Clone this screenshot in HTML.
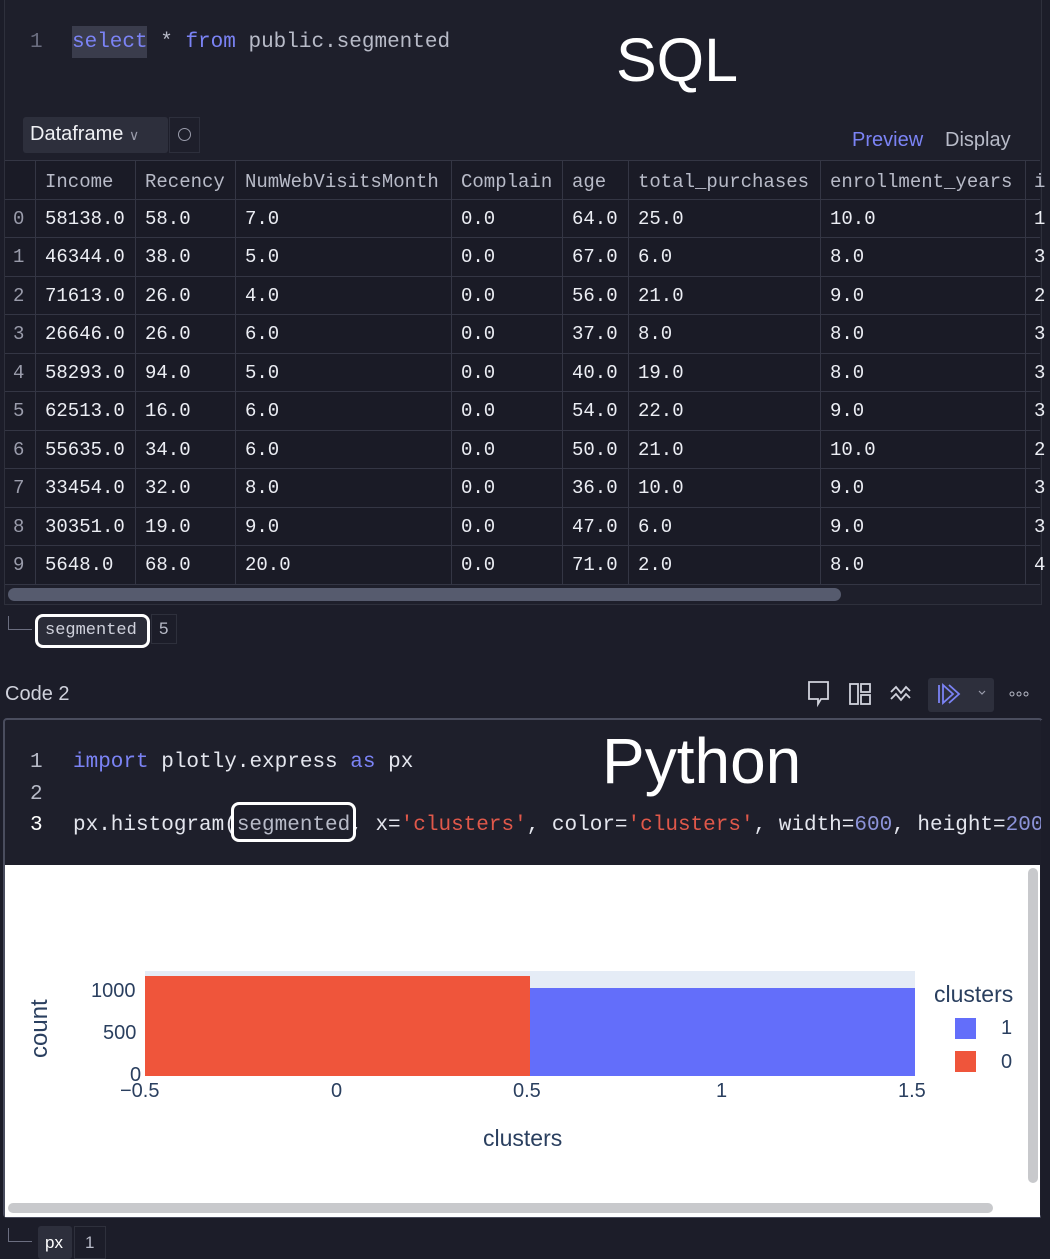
<!DOCTYPE html>
<html><head><meta charset="utf-8"><style>
*{margin:0;padding:0;box-sizing:border-box}
body{width:1050px;height:1259px;background:#1c1d29;position:relative;overflow:hidden;font-family:"Liberation Sans",sans-serif;color:#e4e6ee}
.a{position:absolute;white-space:nowrap}
.m{font-family:"Liberation Mono",monospace}
.kw{color:#7b83f5}
.str{color:#e0584a}
.num{color:#8c93d8}
.cell{position:absolute;font-family:"Liberation Mono",monospace;font-size:19px;color:#eceef4;white-space:nowrap}
.hl{position:absolute;left:5px;width:1035px;height:1px;background:#343644}
.vl{position:absolute;top:160px;width:1px;height:424px;background:#343644}
</style></head><body>
<div class="a" style="left:4px;top:0;width:1038px;height:605px;border:1px solid #2e303c;border-top:none;background:#1e1f2b"></div>
<div class="a m" style="left:30px;top:31px;font-size:21px;color:#6b6e80">1</div>
<div class="a" style="left:72px;top:26px;width:75px;height:32px;background:#3a3c4c"></div>
<div class="a m" style="left:72px;top:31px;font-size:21px;color:#b8bbc8"><span class="kw">select</span> * <span class="kw">from</span> public.segmented</div>
<div class="a" style="left:616px;top:25px;font-size:61px;color:#fff">SQL</div>
<div class="a" style="left:23px;top:117px;width:145px;height:36px;background:#2d2f3c;border-radius:3px"></div>
<div class="a" style="left:30px;top:123px;font-size:20px;color:#f0f1f5">Dataframe <span style="font-size:14px;color:#9a9cab">&#8744;</span></div>
<div class="a" style="left:169px;top:117px;width:31px;height:36px;border:1px solid #2d2f3c"></div>
<div class="a" style="left:178px;top:128px;width:13px;height:13px;border:1.5px solid #9a9cab;border-radius:50%"></div>
<div class="a" style="left:852px;top:129px;font-size:20px;color:#7b83f5">Preview</div>
<div class="a" style="left:852px;top:160px;width:75px;height:2px;background:#b8bbc8"></div>
<div class="a" style="left:945px;top:129px;font-size:20px;color:#b8bbc8">Display</div>
<div class="a" style="left:5px;top:160px;width:1035px;height:424px;background:#1a1b26"></div>
<div class="hl" style="top:160px"></div>
<div class="hl" style="top:199px"></div><div class="hl" style="top:237px"></div><div class="hl" style="top:276px"></div><div class="hl" style="top:314px"></div><div class="hl" style="top:353px"></div><div class="hl" style="top:391px"></div><div class="hl" style="top:430px"></div><div class="hl" style="top:468px"></div><div class="hl" style="top:507px"></div><div class="hl" style="top:545px"></div><div class="hl" style="top:584px"></div>
<div class="vl" style="left:35px"></div><div class="vl" style="left:135px"></div><div class="vl" style="left:235px"></div><div class="vl" style="left:451px"></div><div class="vl" style="left:562px"></div><div class="vl" style="left:628px"></div><div class="vl" style="left:820px"></div><div class="vl" style="left:1025px"></div>
<div class="cell" style="left:45px;top:171px;color:#b8bbc8">Income</div>
<div class="cell" style="left:145px;top:171px;color:#b8bbc8">Recency</div>
<div class="cell" style="left:245px;top:171px;color:#b8bbc8">NumWebVisitsMonth</div>
<div class="cell" style="left:461px;top:171px;color:#b8bbc8">Complain</div>
<div class="cell" style="left:572px;top:171px;color:#b8bbc8">age</div>
<div class="cell" style="left:638px;top:171px;color:#b8bbc8">total_purchases</div>
<div class="cell" style="left:830px;top:171px;color:#b8bbc8">enrollment_years</div>
<div class="cell" style="left:1034px;top:171px;color:#b8bbc8">i</div>
<div class="cell" style="left:13px;top:208px;color:#9a9cab">0</div><div class="cell" style="left:45px;top:208px">58138.0</div><div class="cell" style="left:145px;top:208px">58.0</div><div class="cell" style="left:245px;top:208px">7.0</div><div class="cell" style="left:461px;top:208px">0.0</div><div class="cell" style="left:572px;top:208px">64.0</div><div class="cell" style="left:638px;top:208px">25.0</div><div class="cell" style="left:830px;top:208px">10.0</div><div class="cell" style="left:1034px;top:208px">1</div>
<div class="cell" style="left:13px;top:246px;color:#9a9cab">1</div><div class="cell" style="left:45px;top:246px">46344.0</div><div class="cell" style="left:145px;top:246px">38.0</div><div class="cell" style="left:245px;top:246px">5.0</div><div class="cell" style="left:461px;top:246px">0.0</div><div class="cell" style="left:572px;top:246px">67.0</div><div class="cell" style="left:638px;top:246px">6.0</div><div class="cell" style="left:830px;top:246px">8.0</div><div class="cell" style="left:1034px;top:246px">3</div>
<div class="cell" style="left:13px;top:285px;color:#9a9cab">2</div><div class="cell" style="left:45px;top:285px">71613.0</div><div class="cell" style="left:145px;top:285px">26.0</div><div class="cell" style="left:245px;top:285px">4.0</div><div class="cell" style="left:461px;top:285px">0.0</div><div class="cell" style="left:572px;top:285px">56.0</div><div class="cell" style="left:638px;top:285px">21.0</div><div class="cell" style="left:830px;top:285px">9.0</div><div class="cell" style="left:1034px;top:285px">2</div>
<div class="cell" style="left:13px;top:323px;color:#9a9cab">3</div><div class="cell" style="left:45px;top:323px">26646.0</div><div class="cell" style="left:145px;top:323px">26.0</div><div class="cell" style="left:245px;top:323px">6.0</div><div class="cell" style="left:461px;top:323px">0.0</div><div class="cell" style="left:572px;top:323px">37.0</div><div class="cell" style="left:638px;top:323px">8.0</div><div class="cell" style="left:830px;top:323px">8.0</div><div class="cell" style="left:1034px;top:323px">3</div>
<div class="cell" style="left:13px;top:362px;color:#9a9cab">4</div><div class="cell" style="left:45px;top:362px">58293.0</div><div class="cell" style="left:145px;top:362px">94.0</div><div class="cell" style="left:245px;top:362px">5.0</div><div class="cell" style="left:461px;top:362px">0.0</div><div class="cell" style="left:572px;top:362px">40.0</div><div class="cell" style="left:638px;top:362px">19.0</div><div class="cell" style="left:830px;top:362px">8.0</div><div class="cell" style="left:1034px;top:362px">3</div>
<div class="cell" style="left:13px;top:400px;color:#9a9cab">5</div><div class="cell" style="left:45px;top:400px">62513.0</div><div class="cell" style="left:145px;top:400px">16.0</div><div class="cell" style="left:245px;top:400px">6.0</div><div class="cell" style="left:461px;top:400px">0.0</div><div class="cell" style="left:572px;top:400px">54.0</div><div class="cell" style="left:638px;top:400px">22.0</div><div class="cell" style="left:830px;top:400px">9.0</div><div class="cell" style="left:1034px;top:400px">3</div>
<div class="cell" style="left:13px;top:439px;color:#9a9cab">6</div><div class="cell" style="left:45px;top:439px">55635.0</div><div class="cell" style="left:145px;top:439px">34.0</div><div class="cell" style="left:245px;top:439px">6.0</div><div class="cell" style="left:461px;top:439px">0.0</div><div class="cell" style="left:572px;top:439px">50.0</div><div class="cell" style="left:638px;top:439px">21.0</div><div class="cell" style="left:830px;top:439px">10.0</div><div class="cell" style="left:1034px;top:439px">2</div>
<div class="cell" style="left:13px;top:477px;color:#9a9cab">7</div><div class="cell" style="left:45px;top:477px">33454.0</div><div class="cell" style="left:145px;top:477px">32.0</div><div class="cell" style="left:245px;top:477px">8.0</div><div class="cell" style="left:461px;top:477px">0.0</div><div class="cell" style="left:572px;top:477px">36.0</div><div class="cell" style="left:638px;top:477px">10.0</div><div class="cell" style="left:830px;top:477px">9.0</div><div class="cell" style="left:1034px;top:477px">3</div>
<div class="cell" style="left:13px;top:516px;color:#9a9cab">8</div><div class="cell" style="left:45px;top:516px">30351.0</div><div class="cell" style="left:145px;top:516px">19.0</div><div class="cell" style="left:245px;top:516px">9.0</div><div class="cell" style="left:461px;top:516px">0.0</div><div class="cell" style="left:572px;top:516px">47.0</div><div class="cell" style="left:638px;top:516px">6.0</div><div class="cell" style="left:830px;top:516px">9.0</div><div class="cell" style="left:1034px;top:516px">3</div>
<div class="cell" style="left:13px;top:554px;color:#9a9cab">9</div><div class="cell" style="left:45px;top:554px">5648.0</div><div class="cell" style="left:145px;top:554px">68.0</div><div class="cell" style="left:245px;top:554px">20.0</div><div class="cell" style="left:461px;top:554px">0.0</div><div class="cell" style="left:572px;top:554px">71.0</div><div class="cell" style="left:638px;top:554px">2.0</div><div class="cell" style="left:830px;top:554px">8.0</div><div class="cell" style="left:1034px;top:554px">4</div>
<div class="a" style="left:8px;top:588px;width:833px;height:13px;border-radius:7px;background:#565b6e"></div>
<div class="a" style="left:8px;top:616px;width:24px;height:14px;border-left:1.5px solid #6b6e80;border-bottom:1.5px solid #6b6e80"></div>
<div class="a" style="left:35px;top:614px;width:115px;height:34px;border:3px solid #fff;border-radius:8px;background:#2a2c38"></div>
<div class="a m" style="left:45px;top:621px;font-size:17px;color:#d0d2dc">segmented</div>
<div class="a" style="left:151px;top:614px;width:26px;height:30px;border:1px solid #2e303c"></div>
<div class="a" style="left:159px;top:619px;font-size:17px;color:#b8bbc8">5</div>
<div class="a" style="left:5px;top:683px;font-size:20px;color:#d0d2dc">Code 2</div>
<svg class="a" style="left:800px;top:675px" width="240" height="40" viewBox="0 0 240 40">
<path d="M9 7h19v17h-7l-3 5v-5H9z" fill="none" stroke="#d0d2dc" stroke-width="1.8"/>
<rect x="50" y="9" width="8" height="20" fill="none" stroke="#d0d2dc" stroke-width="1.8"/>
<rect x="61" y="9" width="9" height="8" fill="none" stroke="#d0d2dc" stroke-width="1.8"/>
<rect x="61" y="20" width="9" height="9" fill="none" stroke="#d0d2dc" stroke-width="1.8"/>
<path d="M91 17l5-5 5 6 5-6 4 4M91 24l5-5 5 6 5-6 4 4" fill="none" stroke="#d0d2dc" stroke-width="1.8"/>
<rect x="128" y="3" width="66" height="34" rx="3" fill="#2d2f3c"/>
<path d="M139 10v18M143 10l10 9-10 9zM149 10l10 9-10 9" fill="none" stroke="#7b83f5" stroke-width="1.8"/>
<path d="M179 16l3 3 3-3" fill="none" stroke="#9a9cab" stroke-width="1.2"/>
<circle cx="212" cy="19" r="2" fill="none" stroke="#b8bbc8"/><circle cx="219" cy="19" r="2" fill="none" stroke="#b8bbc8"/><circle cx="226" cy="19" r="2" fill="none" stroke="#b8bbc8"/>
</svg>
<div class="a" style="left:3px;top:718px;width:1040px;height:500px;border:2px solid #4a4d5e;border-radius:4px;background:#1e1f2b"></div>
<div class="a m" style="left:30px;top:751px;font-size:21px;color:#b8bbc8">1</div>
<div class="a m" style="left:30px;top:783px;font-size:21px;color:#b8bbc8">2</div>
<div class="a m" style="left:30px;top:814px;font-size:21px;color:#fff">3</div>
<div class="a m" style="left:73px;top:751px;font-size:21px;color:#e4e6ee"><span class="kw">import</span> plotly.express <span class="kw">as</span> px</div>
<div class="a m" style="left:73px;top:814px;font-size:21px;color:#e4e6ee">px.histogram(<span style="color:#b8bbc8">segmented</span>, x=<span class="str">'clusters'</span>, color=<span class="str">'clusters'</span>, width=<span class="num">600</span>, height=<span class="num">200</span>)</div>
<div class="a" style="left:231px;top:802px;width:125px;height:40px;border:3px solid #fff;border-radius:8px"></div>
<div class="a" style="left:1041px;top:720px;width:9px;height:500px;background:#1c1d29"></div>
<div class="a" style="left:602px;top:724px;font-size:64px;color:#fff">Python</div>
<div class="a" style="left:5px;top:865px;width:1035px;height:352px;background:#fff"></div>
<div class="a" style="left:1028px;top:868px;width:10px;height:315px;border-radius:5px;background:#c8c9cc"></div>
<div class="a" style="left:8px;top:1203px;width:985px;height:10px;border-radius:5px;background:#c8c9cc"></div>
<div class="a" style="left:145px;top:971px;width:770px;height:105px;background:#e5ecf6"></div>
<div class="a" style="left:145px;top:976px;width:385px;height:100px;background:#ef553b"></div>
<div class="a" style="left:530px;top:988px;width:385px;height:88px;background:#636efa"></div>
<div class="a" style="left:91px;top:980px;font-size:20px;color:#2a3f5f">1000</div>
<div class="a" style="left:103px;top:1022px;font-size:20px;color:#2a3f5f">500</div>
<div class="a" style="left:130px;top:1064px;font-size:20px;color:#2a3f5f">0</div>
<div class="a" style="left:120px;top:1080px;font-size:20px;color:#2a3f5f">−0.5</div>
<div class="a" style="left:331px;top:1080px;font-size:20px;color:#2a3f5f">0</div>
<div class="a" style="left:513px;top:1080px;font-size:20px;color:#2a3f5f">0.5</div>
<div class="a" style="left:716px;top:1080px;font-size:20px;color:#2a3f5f">1</div>
<div class="a" style="left:898px;top:1080px;font-size:20px;color:#2a3f5f">1.5</div>
<div class="a" style="left:483px;top:1125px;font-size:23px;color:#2a3f5f">clusters</div>
<div class="a" style="left:26px;top:1058px;font-size:24px;color:#2a3f5f;transform:rotate(-90deg);transform-origin:0 0">count</div>
<div class="a" style="left:934px;top:981px;font-size:23px;color:#2a3f5f">clusters</div>
<div class="a" style="left:955px;top:1018px;width:21px;height:21px;background:#636efa"></div>
<div class="a" style="left:1001px;top:1017px;font-size:20px;color:#2a3f5f">1</div>
<div class="a" style="left:955px;top:1051px;width:21px;height:21px;background:#ef553b"></div>
<div class="a" style="left:1001px;top:1051px;font-size:20px;color:#2a3f5f">0</div>
<div class="a" style="left:8px;top:1228px;width:24px;height:14px;border-left:1.5px solid #6b6e80;border-bottom:1.5px solid #6b6e80"></div>
<div class="a" style="left:38px;top:1226px;width:34px;height:33px;background:#2d2f3c;border-radius:3px"></div>
<div class="a" style="left:45px;top:1233px;font-size:17px;color:#fff">px</div>
<div class="a" style="left:74px;top:1226px;width:32px;height:33px;border:1px solid #2e303c"></div>
<div class="a" style="left:85px;top:1233px;font-size:17px;color:#b8bbc8">1</div>
</body></html>
